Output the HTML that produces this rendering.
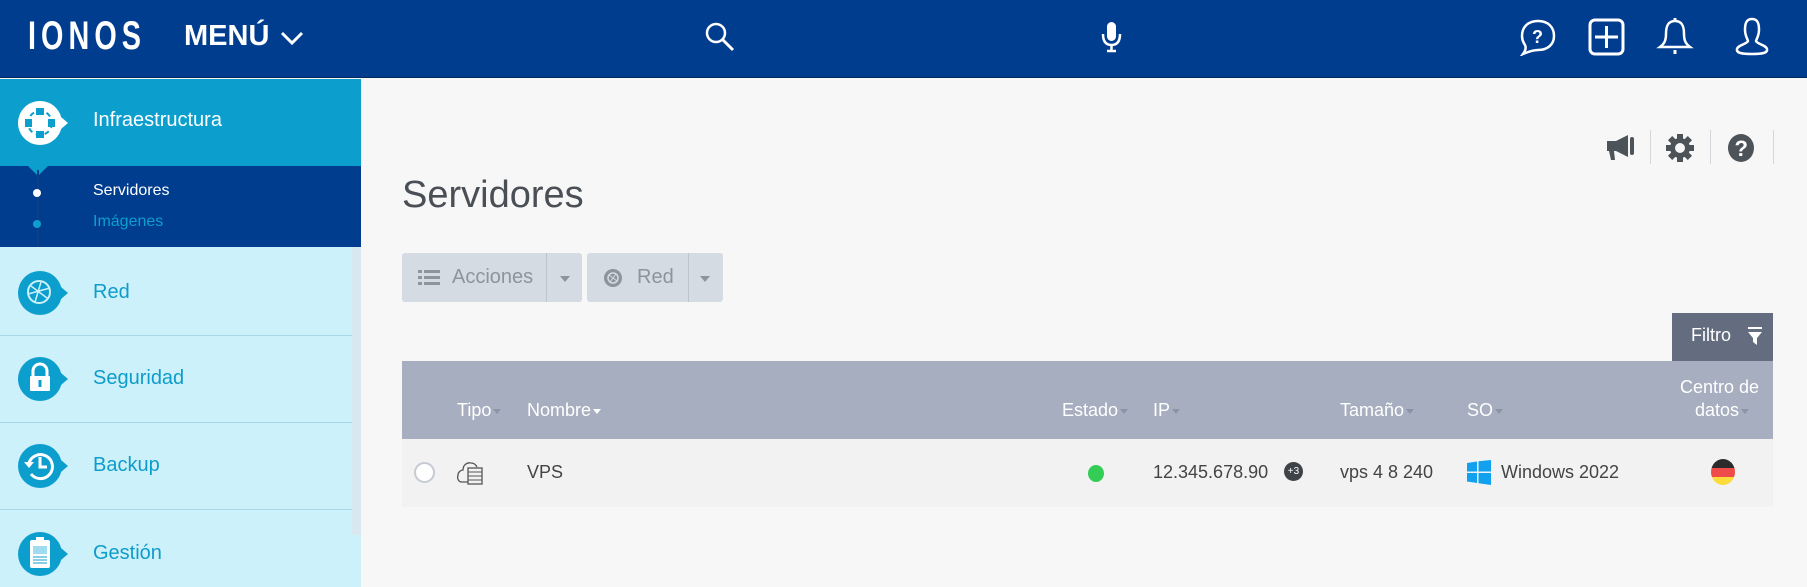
<!DOCTYPE html>
<html><head><meta charset="utf-8"><style>
*{margin:0;padding:0;box-sizing:border-box}
body{width:1807px;height:587px;overflow:hidden;background:#f7f7f7;font-family:"Liberation Sans",sans-serif;position:relative}
.a{position:absolute}
.hdr{left:0;top:0;width:1807px;height:78px;background:#003d8f;border-bottom:1px solid #02295e}
.side{left:0;top:79px;width:352px;height:508px;background:#cdf1fa}
.strip{left:352px;top:79px;width:9px;height:456px;background:#d7e8f1}
.sec{left:0;width:352px;border-bottom:1.5px solid #a9d7ea}
.lbl{font-size:20px;color:#0e9ccb}
.th{color:#fff;font-size:18px}
.td{color:#444;font-size:18px}
.car{display:inline-block;width:0;height:0;border-left:4px solid transparent;border-right:4px solid transparent;border-top:5px solid #8c93a6;margin-left:2px;vertical-align:middle}
</style></head><body>
<div class="a hdr"></div>
<div class="a" style="left:28px;top:14px;color:#fff;font-size:40px;letter-spacing:7px;font-weight:bold;transform:scaleX(0.72);transform-origin:left">IONOS</div>
<div class="a" style="left:184px;top:20px;color:#fff;font-size:29px;font-weight:bold">MENÚ</div>
<svg class="a" style="left:280px;top:30px" width="24" height="16"><path d="M2 3 L12 13 L22 3" stroke="#fff" stroke-width="3" fill="none"/></svg>
<svg class="a" style="left:704px;top:21px" width="32" height="32"><circle cx="12" cy="12" r="9" stroke="#fff" stroke-width="2.5" fill="none"/><path d="M18 18 L29 29" stroke="#fff" stroke-width="3"/></svg>
<svg class="a" style="left:1100px;top:20px" width="24" height="34"><rect x="7" y="2" width="9" height="19" rx="4.5" fill="#fff"/><path d="M3 14 Q3 25 11.5 25 Q20 25 20 14" stroke="#fff" stroke-width="2.5" fill="none"/><path d="M11.5 25 V31 M7 31 H16" stroke="#fff" stroke-width="2.5"/></svg>
<svg class="a" style="left:1518px;top:18px" width="40" height="38"><path d="M20 3 C30 3 36 9 36 18 C36 27 29 32 20 32 C16 32 12 33 5 36 C8 32 8 29 7 27 C5 24 4 21 4 18 C4 9 10 3 20 3Z" stroke="#fff" stroke-width="2.5" fill="none"/><text x="14" y="25" fill="#fff" font-size="18" font-weight="bold" font-family="Liberation Sans">?</text></svg>
<svg class="a" style="left:1588px;top:18px" width="38" height="38"><rect x="2" y="2" width="33" height="34" rx="5" stroke="#fff" stroke-width="3" fill="none"/><path d="M18.5 8 V30 M7 19 H30" stroke="#fff" stroke-width="3"/></svg>
<svg class="a" style="left:1656px;top:16px" width="38" height="40"><path d="M19 5 C11 5 10 12 10 18 C10 25 8 28 4 31 H34 C30 28 28 25 28 18 C28 12 27 5 19 5Z" stroke="#fff" stroke-width="2.5" fill="none"/><path d="M19 2 V6 M19 34 V38" stroke="#fff" stroke-width="3"/></svg>
<svg class="a" style="left:1734px;top:16px" width="36" height="40"><path d="M18 3 C12 3 11 8 11 14 C11 19 13 22 14 25 C13 28 4 29 3 33 C2 37 8 38 18 38 C28 38 34 37 33 33 C32 29 23 28 22 25 C23 22 25 19 25 14 C25 8 24 3 18 3Z" stroke="#fff" stroke-width="2.5" fill="none"/></svg>

<div class="a side"></div>
<div class="a strip"></div>
<div class="a" style="left:352px;top:535px;width:9px;height:52px;background:#cdf1fa"></div>
<div class="a" style="left:0;top:79px;width:361px;height:87px;background:#0c9fcd"></div>
<div class="a" style="left:0;top:166px;width:361px;height:81px;background:#003d8f"></div>
<div class="a" style="left:28px;top:166px;width:0;height:0;border-left:10px solid transparent;border-right:10px solid transparent;border-top:10px solid #0c9fcd"></div>
<div class="a" style="left:37px;top:170px;width:2px;height:77px;background:#0b3f86"></div>
<div class="a" style="left:33px;top:189px;width:8px;height:8px;border-radius:50%;background:#fff"></div>
<div class="a" style="left:33px;top:220px;width:8px;height:8px;border-radius:50%;background:#0c9fcd"></div>
<svg class="a" style="left:17px;top:100px" width="54" height="46"><circle cx="23" cy="23" r="22" fill="#fff"/><path d="M44 17 L51 23 L44 29Z" fill="#fff"/><g fill="#0c9fcd"><rect x="19" y="8" width="8" height="7"/><rect x="19" y="31" width="8" height="7"/><rect x="8" y="19" width="7" height="8"/><rect x="31" y="19" width="7" height="8"/></g><circle cx="23" cy="23" r="12" stroke="#0c9fcd" stroke-width="2" stroke-dasharray="5 4" fill="none"/></svg>
<div class="a" style="left:93px;top:109px;color:#fff;font-size:20px">Infraestructura</div>
<div class="a" style="left:93px;top:182px;color:#fff;font-size:16px">Servidores</div>
<div class="a" style="left:93px;top:213px;color:#0c9fcd;font-size:16px">Imágenes</div>

<div class="a sec" style="top:247px;height:89px"></div>
<div class="a sec" style="top:336px;height:87px"></div>
<div class="a sec" style="top:423px;height:87px"></div>
<svg class="a" style="left:17px;top:270px" width="54" height="46"><circle cx="23" cy="23" r="22" fill="#0c9fcd"/><path d="M44 17 L51 23 L44 29Z" fill="#0c9fcd"/><circle cx="22" cy="22" r="11" stroke="#cdf1fa" stroke-width="2" fill="none"/><path d="M14 16 L30 28 M18 32 L24 12 M11 24 L33 18" stroke="#cdf1fa" stroke-width="1.5"/></svg>
<div class="a lbl" style="left:93px;top:281px">Red</div>
<svg class="a" style="left:17px;top:356px" width="54" height="46"><circle cx="23" cy="23" r="22" fill="#0c9fcd"/><path d="M44 17 L51 23 L44 29Z" fill="#0c9fcd"/><path d="M16 21 V15 A7 7 0 0 1 30 15 V21" stroke="#fff" stroke-width="3" fill="none"/><rect x="13" y="20" width="20" height="15" rx="1" fill="#fff"/><rect x="21.5" y="24" width="3" height="7" fill="#0c9fcd"/></svg>
<div class="a lbl" style="left:93px;top:367px">Seguridad</div>
<svg class="a" style="left:17px;top:443px" width="54" height="46"><circle cx="23" cy="23" r="22" fill="#0c9fcd"/><path d="M44 17 L51 23 L44 29Z" fill="#0c9fcd"/><path d="M12 20 A12 12 0 1 1 14 31" stroke="#fff" stroke-width="3" fill="none"/><path d="M7 19 L12 25 L17 19Z" fill="#fff"/><path d="M23 14 V24 H30" stroke="#fff" stroke-width="3" fill="none"/></svg>
<div class="a lbl" style="left:93px;top:454px">Backup</div>
<svg class="a" style="left:17px;top:531px" width="54" height="46"><circle cx="23" cy="23" r="22" fill="#0c9fcd"/><path d="M44 17 L51 23 L44 29Z" fill="#0c9fcd"/><rect x="13" y="9" width="20" height="28" rx="2" fill="#fff"/><rect x="19" y="6" width="8" height="5" fill="#fff"/><rect x="16" y="15" width="14" height="8" fill="#9fdcf0"/><path d="M16 26 H30 M16 29 H30 M16 32 H30" stroke="#0c9fcd" stroke-width="1"/></svg>
<div class="a lbl" style="left:93px;top:542px">Gestión</div>

<div class="a" style="left:402px;top:174px;font-size:38px;color:#4a4f55">Servidores</div>
<svg class="a" style="left:1604px;top:133px" width="34" height="30"><path d="M3 8 H12 L24 2 V24 L12 18 H10 L11 27 H7 L5 18 H3Z" fill="#4d5459"/><rect x="26" y="4" width="4" height="18" rx="2" fill="#4d5459"/></svg>
<div class="a" style="left:1650px;top:130px;width:1px;height:34px;background:#d3d6da"></div>
<svg class="a" style="left:1666px;top:133px" width="28" height="30"><g fill="#4d5459"><circle cx="14" cy="15" r="10"/><rect x="11" y="1" width="6" height="28"/><rect x="0" y="12" width="28" height="6"/><rect x="11" y="1" width="6" height="28" transform="rotate(45 14 15)"/><rect x="11" y="1" width="6" height="28" transform="rotate(-45 14 15)"/></g><circle cx="14" cy="15" r="5" fill="#f7f7f7"/></svg>
<div class="a" style="left:1710px;top:130px;width:1px;height:34px;background:#d3d6da"></div>
<svg class="a" style="left:1727px;top:133px" width="28" height="30"><ellipse cx="14" cy="15" rx="13" ry="14" fill="#4d5459"/><text x="7.5" y="23" fill="#fff" font-size="22" font-weight="bold" font-family="Liberation Sans">?</text></svg>
<div class="a" style="left:1773px;top:130px;width:1px;height:34px;background:#d3d6da"></div>

<div class="a" style="left:402px;top:253px;width:180px;height:49px;background:#d4dbe3;border-radius:3px"></div>
<div class="a" style="left:546px;top:253px;width:1px;height:49px;background:#bcc4ce"></div>
<svg class="a" style="left:418px;top:270px" width="22" height="16"><g fill="#8d949b"><rect x="0" y="0" width="4" height="3"/><rect x="6" y="0" width="16" height="3"/><rect x="0" y="6" width="4" height="3"/><rect x="6" y="6" width="16" height="3"/><rect x="0" y="12" width="4" height="3"/><rect x="6" y="12" width="16" height="3"/></g></svg>
<div class="a" style="left:452px;top:266px;font-size:20px;color:#8d949b">Acciones</div>
<div class="a" style="left:560px;top:276px;border-left:5px solid transparent;border-right:5px solid transparent;border-top:6px solid #8d949b"></div>
<div class="a" style="left:587px;top:253px;width:136px;height:49px;background:#d4dbe3;border-radius:3px"></div>
<div class="a" style="left:688px;top:253px;width:1px;height:49px;background:#bcc4ce"></div>
<svg class="a" style="left:603px;top:268px" width="20" height="20"><circle cx="10" cy="10" r="9" fill="#8d949b"/><circle cx="10" cy="10" r="5" stroke="#d4dbe3" stroke-width="1.5" fill="none"/><path d="M6 7 L14 13 M7 14 L13 6" stroke="#d4dbe3" stroke-width="1"/></svg>
<div class="a" style="left:637px;top:266px;font-size:20px;color:#8d949b">Red</div>
<div class="a" style="left:700px;top:276px;border-left:5px solid transparent;border-right:5px solid transparent;border-top:6px solid #8d949b"></div>

<div class="a" style="left:1672px;top:313px;width:101px;height:48px;background:#646d80"></div>
<div class="a" style="left:1691px;top:325px;color:#fff;font-size:18px">Filtro</div>
<svg class="a" style="left:1747px;top:327px" width="16" height="20"><path d="M1 1 H15" stroke="#fff" stroke-width="2"/><path d="M1 5 H15 L10 11 V18 L6 15 V11Z" fill="#fff"/></svg>

<div class="a" style="left:402px;top:361px;width:1371px;height:78px;background:#a6aebf"></div>
<div class="a th" style="left:457px;top:400px">Tipo<span class="car"></span></div>
<div class="a th" style="left:527px;top:400px">Nombre<span class="car" style="border-top-color:#fff"></span></div>
<div class="a th" style="left:1062px;top:400px">Estado<span class="car"></span></div>
<div class="a th" style="left:1153px;top:400px">IP<span class="car"></span></div>
<div class="a th" style="left:1340px;top:400px">Tamaño<span class="car"></span></div>
<div class="a th" style="left:1467px;top:400px">SO<span class="car"></span></div>
<div class="a th" style="left:1680px;top:377px">Centro de</div>
<div class="a th" style="left:1695px;top:400px">datos<span class="car"></span></div>

<div class="a" style="left:402px;top:439px;width:1371px;height:68px;background:#f2f2f2"></div>
<div class="a" style="left:414px;top:462px;width:21px;height:21px;border-radius:50%;border:2px solid #c6cbd3;background:#fff"></div>
<svg class="a" style="left:456px;top:460px" width="30" height="26"><path d="M12 22 H6 C2 22 1 18 2 15 C2 12 5 10 7 10 C7 5 11 2 15 3 C18 3 20 5 21 7" stroke="#555" stroke-width="1.3" fill="none"/><rect x="12" y="8" width="14" height="16" stroke="#555" stroke-width="1.3" fill="#f2f2f2"/><path d="M12 12 H26 M12 16 H26 M12 20 H26" stroke="#555" stroke-width="1"/></svg>
<div class="a td" style="left:527px;top:462px">VPS</div>
<div class="a" style="left:1088px;top:465px;width:16px;height:17px;border-radius:50%;background:#33cc55"></div>
<div class="a td" style="left:1153px;top:462px">12.345.678.90</div>
<div class="a" style="left:1284px;top:462px;width:19px;height:19px;border-radius:50%;background:#3d4349;color:#fff;font-size:10px;line-height:19px;text-align:center">+3</div>
<div class="a td" style="left:1340px;top:462px">vps 4 8 240</div>
<svg class="a" style="left:1467px;top:460px" width="24" height="25"><g fill="#11a1ef"><path d="M0 3 L10 1.5 V11.5 H0Z"/><path d="M11.5 1.3 L24 0 V11.5 H11.5Z"/><path d="M0 13 H10 V23 L0 21.5Z"/><path d="M11.5 13 H24 V25 L11.5 23.3Z"/></g></svg>
<div class="a td" style="left:1501px;top:462px">Windows 2022</div>
<svg class="a" style="left:1711px;top:459px" width="24" height="26"><defs><clipPath id="c"><ellipse cx="12" cy="13" rx="12" ry="13"/></clipPath></defs><g clip-path="url(#c)"><rect width="24" height="9" fill="#2b2b2b"/><rect y="9" width="24" height="9" fill="#ef4b4b"/><rect y="18" width="24" height="8" fill="#fcdb3a"/></g></svg>
</body></html>
